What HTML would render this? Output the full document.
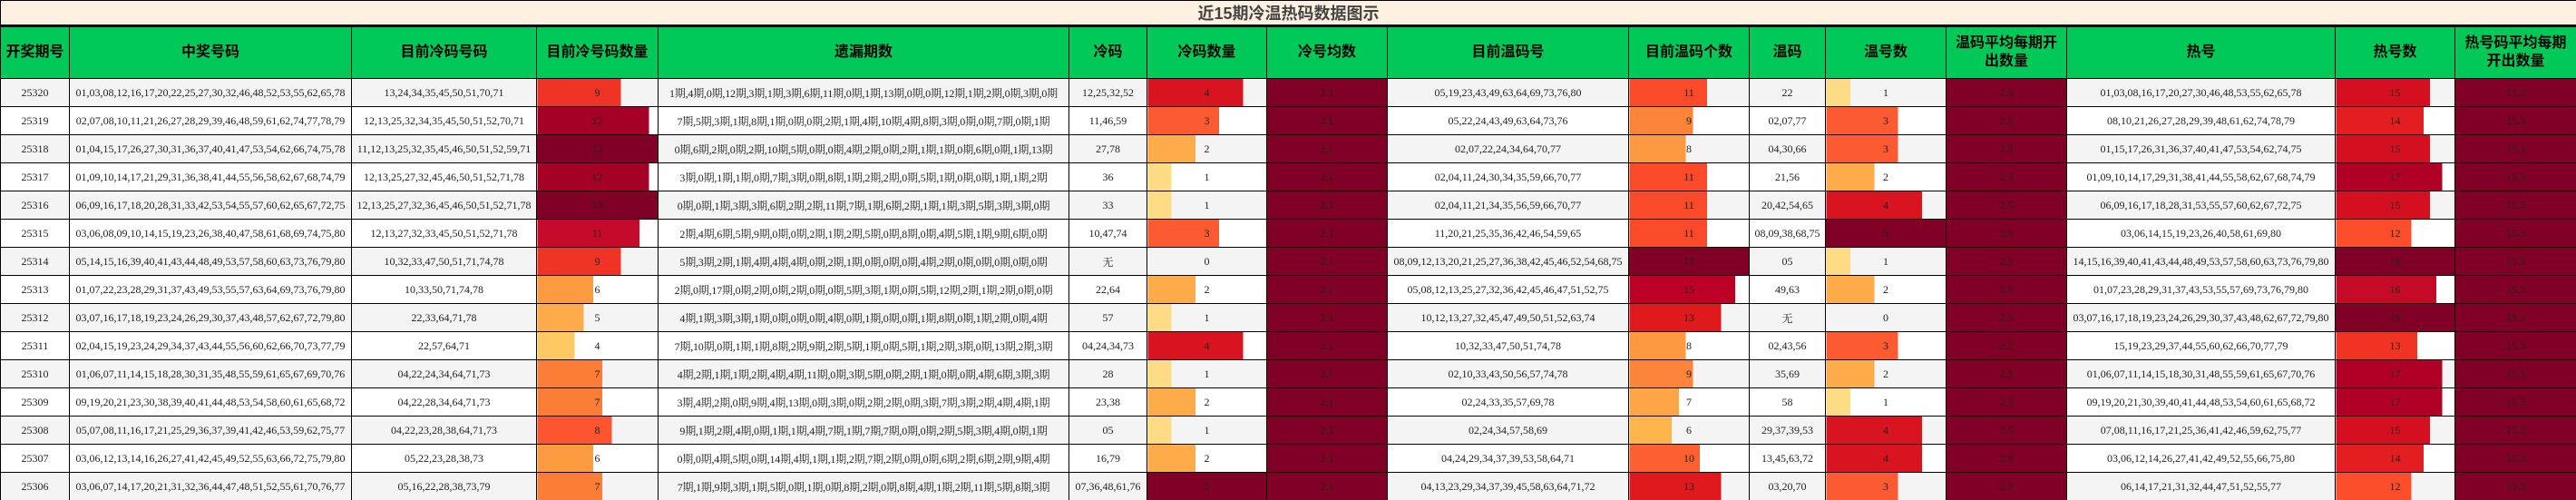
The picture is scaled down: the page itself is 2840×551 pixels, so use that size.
<!DOCTYPE html>
<html><head><meta charset="utf-8">
<style>
*{margin:0;padding:0;box-sizing:border-box}
html,body{width:2840px;height:551px;overflow:hidden;background:#fff}
table{border-collapse:collapse;table-layout:fixed;width:2840px;font-family:"Liberation Serif","Noto Serif CJK SC",serif;font-size:12px;color:#222}
td,th{border:1px solid #000;text-align:center;vertical-align:middle;overflow:hidden;white-space:nowrap}
.t td{height:27px;background:#fff0e0;border-bottom:3px solid #000;font-family:"Liberation Sans","Noto Sans CJK SC",sans-serif;font-size:18px;font-weight:bold;color:#444}
.h th{height:58px;background:#00c957;font-family:"Liberation Sans","Noto Sans CJK SC",sans-serif;font-size:16px;font-weight:bold;color:#000;line-height:20px;padding:0 2px}
tr.r td{height:31px}
tr.o{background:#f4f4f4}
tr.e{background:#fff}
.a{background:#800026}
.m{font-size:12px;letter-spacing:-0.2px}
</style></head><body>
<table>
<colgroup><col style="width:76px"><col style="width:311px"><col style="width:204px"><col style="width:134px"><col style="width:453px"><col style="width:86px"><col style="width:132px"><col style="width:133px"><col style="width:266px"><col style="width:133px"><col style="width:84px"><col style="width:133px"><col style="width:133px"><col style="width:296px"><col style="width:132px"><col style="width:134px"></colgroup>
<tr class="t"><td colspan="16">近15期冷温热码数据图示</td></tr>
<tr class="h"><th>开奖期号</th><th>中奖号码</th><th>目前冷码号码</th><th>目前冷号码数量</th><th>遗漏期数</th><th>冷码</th><th>冷码数量</th><th>冷号均数</th><th>目前温码号</th><th>目前温码个数</th><th>温码</th><th>温号数</th><th>温码平均每期开<br>出数量</th><th>热号</th><th>热号数</th><th>热号码平均每期<br>开出数量</th></tr>

<tr class="r o"><td>25320</td><td>01,03,08,12,16,17,20,22,25,27,30,32,46,48,52,53,55,62,65,78</td><td>13,24,34,35,45,50,51,70,71</td><td style="background:linear-gradient(90deg,#ef3425 69.2%,transparent 0)">9</td><td class="m">1期,4期,0期,12期,3期,1期,3期,6期,11期,0期,1期,13期,0期,0期,12期,1期,2期,0期,3期,0期</td><td>12,25,32,52</td><td style="background:linear-gradient(90deg,#d7141f 80%,transparent 0)">4</td><td class="a">2.1</td><td>05,19,23,43,49,63,64,69,73,76,80</td><td style="background:linear-gradient(90deg,#fa4a29 64.7%,transparent 0)">11</td><td>22</td><td style="background:linear-gradient(90deg,#fedc85 20%,transparent 0)">1</td><td class="a">2.5</td><td>01,03,08,16,17,20,27,30,46,48,53,55,62,65,78</td><td style="background:linear-gradient(90deg,#d41020 78.9%,transparent 0)">15</td><td class="a">15.3</td></tr>

<tr class="r e"><td>25319</td><td>02,07,08,10,11,21,26,27,28,29,39,46,48,59,61,62,74,77,78,79</td><td>12,13,25,32,34,35,45,50,51,52,70,71</td><td style="background:linear-gradient(90deg,#a50026 92.3%,transparent 0)">12</td><td class="m">7期,5期,3期,1期,8期,1期,0期,0期,2期,1期,4期,10期,4期,8期,3期,0期,0期,7期,0期,1期</td><td>11,46,59</td><td style="background:linear-gradient(90deg,#fc5a31 60%,transparent 0)">3</td><td class="a">2.1</td><td>05,22,24,43,49,63,64,73,76</td><td style="background:linear-gradient(90deg,#fc8438 52.9%,transparent 0)">9</td><td>02,07,77</td><td style="background:linear-gradient(90deg,#fc5a31 60%,transparent 0)">3</td><td class="a">2.5</td><td>08,10,21,26,27,28,29,39,48,61,62,74,78,79</td><td style="background:linear-gradient(90deg,#e41e20 73.7%,transparent 0)">14</td><td class="a">15.3</td></tr>

<tr class="r o"><td>25318</td><td>01,04,15,17,26,27,30,31,36,37,40,41,47,53,54,62,66,74,75,78</td><td>11,12,13,25,32,35,45,46,50,51,52,59,71</td><td style="background:#800026">13</td><td class="m">0期,6期,2期,0期,2期,10期,5期,0期,0期,4期,2期,0期,2期,1期,1期,0期,6期,0期,1期,13期</td><td>27,78</td><td style="background:linear-gradient(90deg,#feab49 40%,transparent 0)">2</td><td class="a">2.1</td><td>02,07,22,24,34,64,70,77</td><td style="background:linear-gradient(90deg,#fd9a41 47.1%,transparent 0)">8</td><td>04,30,66</td><td style="background:linear-gradient(90deg,#fc5a31 60%,transparent 0)">3</td><td class="a">2.5</td><td>01,15,17,26,31,36,37,40,41,47,53,54,62,74,75</td><td style="background:linear-gradient(90deg,#d41020 78.9%,transparent 0)">15</td><td class="a">15.3</td></tr>

<tr class="r e"><td>25317</td><td>01,09,10,14,17,21,29,31,36,38,41,44,55,56,58,62,67,68,74,79</td><td>12,13,25,27,32,45,46,50,51,52,71,78</td><td style="background:linear-gradient(90deg,#a50026 92.3%,transparent 0)">12</td><td class="m">3期,0期,1期,1期,0期,7期,3期,0期,8期,1期,2期,2期,0期,5期,1期,0期,0期,1期,1期,2期</td><td>36</td><td style="background:linear-gradient(90deg,#fedc85 20%,transparent 0)">1</td><td class="a">2.1</td><td>02,04,11,24,30,34,35,59,66,70,77</td><td style="background:linear-gradient(90deg,#fa4a29 64.7%,transparent 0)">11</td><td>21,56</td><td style="background:linear-gradient(90deg,#feab49 40%,transparent 0)">2</td><td class="a">2.5</td><td>01,09,10,14,17,29,31,38,41,44,55,58,62,67,68,74,79</td><td style="background:linear-gradient(90deg,#b10026 89.5%,transparent 0)">17</td><td class="a">15.3</td></tr>

<tr class="r o"><td>25316</td><td>06,09,16,17,18,20,28,31,33,42,53,54,55,57,60,62,65,67,72,75</td><td>12,13,25,27,32,36,45,46,50,51,52,71,78</td><td style="background:#800026">13</td><td class="m">0期,0期,1期,3期,3期,6期,2期,2期,11期,7期,1期,6期,2期,1期,1期,3期,5期,3期,3期,0期</td><td>33</td><td style="background:linear-gradient(90deg,#fedc85 20%,transparent 0)">1</td><td class="a">2.1</td><td>02,04,11,21,34,35,56,59,66,70,77</td><td style="background:linear-gradient(90deg,#fa4a29 64.7%,transparent 0)">11</td><td>20,42,54,65</td><td style="background:linear-gradient(90deg,#d7141f 80%,transparent 0)">4</td><td class="a">2.5</td><td>06,09,16,17,18,28,31,53,55,57,60,62,67,72,75</td><td style="background:linear-gradient(90deg,#d41020 78.9%,transparent 0)">15</td><td class="a">15.3</td></tr>

<tr class="r e"><td>25315</td><td>03,06,08,09,10,14,15,19,23,26,38,40,47,58,61,68,69,74,75,80</td><td>12,13,27,32,33,45,50,51,52,71,78</td><td style="background:linear-gradient(90deg,#c60a2b 84.6%,transparent 0)">11</td><td class="m">2期,4期,6期,5期,9期,0期,0期,2期,1期,2期,5期,0期,8期,0期,4期,5期,1期,9期,6期,0期</td><td>10,47,74</td><td style="background:linear-gradient(90deg,#fc5a31 60%,transparent 0)">3</td><td class="a">2.1</td><td>11,20,21,25,35,36,42,46,54,59,65</td><td style="background:linear-gradient(90deg,#fa4a29 64.7%,transparent 0)">11</td><td>08,09,38,68,75</td><td style="background:#800026">5</td><td class="a">2.5</td><td>03,06,14,15,19,23,26,40,58,61,69,80</td><td style="background:linear-gradient(90deg,#fc4e2a 63.2%,transparent 0)">12</td><td class="a">15.3</td></tr>

<tr class="r o"><td>25314</td><td>05,14,15,16,39,40,41,43,44,48,49,53,57,58,60,63,73,76,79,80</td><td>10,32,33,47,50,51,71,74,78</td><td style="background:linear-gradient(90deg,#ef3425 69.2%,transparent 0)">9</td><td class="m">5期,3期,2期,1期,4期,4期,4期,0期,2期,1期,0期,0期,0期,4期,2期,0期,0期,0期,0期,0期</td><td>无</td><td>0</td><td class="a">2.1</td><td>08,09,12,13,20,21,25,27,36,38,42,45,46,52,54,68,75</td><td style="background:#800026">17</td><td>05</td><td style="background:linear-gradient(90deg,#fedc85 20%,transparent 0)">1</td><td class="a">2.5</td><td>14,15,16,39,40,41,43,44,48,49,53,57,58,60,63,73,76,79,80</td><td style="background:#800026">19</td><td class="a">15.3</td></tr>

<tr class="r e"><td>25313</td><td>01,07,22,23,28,29,31,37,43,49,53,55,57,63,64,69,73,76,79,80</td><td>10,33,50,71,74,78</td><td style="background:linear-gradient(90deg,#fd9b40 46.2%,transparent 0)">6</td><td class="m">2期,0期,17期,0期,2期,0期,2期,0期,0期,5期,3期,1期,0期,5期,12期,2期,1期,2期,0期,0期</td><td>22,64</td><td style="background:linear-gradient(90deg,#feab49 40%,transparent 0)">2</td><td class="a">2.1</td><td>05,08,12,13,25,27,32,36,42,45,46,47,51,52,75</td><td style="background:linear-gradient(90deg,#bd0026 88.2%,transparent 0)">15</td><td>49,63</td><td style="background:linear-gradient(90deg,#feab49 40%,transparent 0)">2</td><td class="a">2.5</td><td>01,07,23,28,29,31,37,43,53,55,57,69,73,76,79,80</td><td style="background:linear-gradient(90deg,#c40a26 84.2%,transparent 0)">16</td><td class="a">15.3</td></tr>

<tr class="r o"><td>25312</td><td>03,07,16,17,18,19,23,24,26,29,30,37,43,48,57,62,67,72,79,80</td><td>22,33,64,71,78</td><td style="background:linear-gradient(90deg,#feab49 38.5%,transparent 0)">5</td><td class="m">4期,1期,3期,3期,1期,0期,0期,0期,4期,0期,1期,0期,0期,1期,8期,0期,1期,2期,0期,4期</td><td>57</td><td style="background:linear-gradient(90deg,#fedc85 20%,transparent 0)">1</td><td class="a">2.1</td><td>10,12,13,27,32,45,47,49,50,51,52,63,74</td><td style="background:linear-gradient(90deg,#e0191c 76.5%,transparent 0)">13</td><td>无</td><td>0</td><td class="a">2.5</td><td>03,07,16,17,18,19,23,24,26,29,30,37,43,48,62,67,72,79,80</td><td style="background:#800026">19</td><td class="a">15.3</td></tr>

<tr class="r e"><td>25311</td><td>02,04,15,19,23,24,29,34,37,43,44,55,56,60,62,66,70,73,77,79</td><td>22,57,64,71</td><td style="background:linear-gradient(90deg,#fec862 30.8%,transparent 0)">4</td><td class="m">7期,10期,0期,1期,1期,8期,2期,9期,2期,5期,1期,0期,5期,1期,2期,3期,0期,13期,2期,3期</td><td>04,24,34,73</td><td style="background:linear-gradient(90deg,#d7141f 80%,transparent 0)">4</td><td class="a">2.1</td><td>10,32,33,47,50,51,74,78</td><td style="background:linear-gradient(90deg,#fd9a41 47.1%,transparent 0)">8</td><td>02,43,56</td><td style="background:linear-gradient(90deg,#fc5a31 60%,transparent 0)">3</td><td class="a">2.5</td><td>15,19,23,29,37,44,55,60,62,66,70,77,79</td><td style="background:linear-gradient(90deg,#f03323 68.4%,transparent 0)">13</td><td class="a">15.3</td></tr>

<tr class="r o"><td>25310</td><td>01,06,07,11,14,15,18,28,30,31,35,48,55,59,61,65,67,69,70,76</td><td>04,22,24,34,64,71,73</td><td style="background:linear-gradient(90deg,#fc7d36 53.8%,transparent 0)">7</td><td class="m">4期,2期,1期,1期,2期,4期,4期,11期,0期,3期,5期,0期,2期,1期,0期,0期,4期,6期,3期,3期</td><td>28</td><td style="background:linear-gradient(90deg,#fedc85 20%,transparent 0)">1</td><td class="a">2.1</td><td>02,10,33,43,50,56,57,74,78</td><td style="background:linear-gradient(90deg,#fc8438 52.9%,transparent 0)">9</td><td>35,69</td><td style="background:linear-gradient(90deg,#feab49 40%,transparent 0)">2</td><td class="a">2.5</td><td>01,06,07,11,14,15,18,30,31,48,55,59,61,65,67,70,76</td><td style="background:linear-gradient(90deg,#b10026 89.5%,transparent 0)">17</td><td class="a">15.3</td></tr>

<tr class="r e"><td>25309</td><td>09,19,20,21,23,30,38,39,40,41,44,48,53,54,58,60,61,65,68,72</td><td>04,22,28,34,64,71,73</td><td style="background:linear-gradient(90deg,#fc7d36 53.8%,transparent 0)">7</td><td class="m">3期,4期,2期,0期,9期,4期,13期,0期,3期,0期,2期,2期,0期,3期,7期,3期,2期,4期,4期,1期</td><td>23,38</td><td style="background:linear-gradient(90deg,#feab49 40%,transparent 0)">2</td><td class="a">2.1</td><td>02,24,33,35,57,69,78</td><td style="background:linear-gradient(90deg,#fea647 41.2%,transparent 0)">7</td><td>58</td><td style="background:linear-gradient(90deg,#fedc85 20%,transparent 0)">1</td><td class="a">2.5</td><td>09,19,20,21,30,39,40,41,44,48,53,54,60,61,65,68,72</td><td style="background:linear-gradient(90deg,#b10026 89.5%,transparent 0)">17</td><td class="a">15.3</td></tr>

<tr class="r o"><td>25308</td><td>05,07,08,11,16,17,21,25,29,36,37,39,41,42,46,53,59,62,75,77</td><td>04,22,23,28,38,64,71,73</td><td style="background:linear-gradient(90deg,#fc5530 61.5%,transparent 0)">8</td><td class="m">9期,1期,2期,4期,0期,1期,1期,4期,7期,1期,7期,7期,0期,0期,2期,5期,3期,4期,0期,1期</td><td>05</td><td style="background:linear-gradient(90deg,#fedc85 20%,transparent 0)">1</td><td class="a">2.1</td><td>02,24,34,57,58,69</td><td style="background:linear-gradient(90deg,#feb54c 35.3%,transparent 0)">6</td><td>29,37,39,53</td><td style="background:linear-gradient(90deg,#d7141f 80%,transparent 0)">4</td><td class="a">2.5</td><td>07,08,11,16,17,21,25,36,41,42,46,59,62,75,77</td><td style="background:linear-gradient(90deg,#d41020 78.9%,transparent 0)">15</td><td class="a">15.3</td></tr>

<tr class="r e"><td>25307</td><td>03,06,12,13,14,16,26,27,41,42,45,49,52,55,63,66,72,75,79,80</td><td>05,22,23,28,38,73</td><td style="background:linear-gradient(90deg,#fd9b40 46.2%,transparent 0)">6</td><td class="m">0期,0期,4期,5期,0期,14期,4期,1期,1期,2期,7期,2期,0期,0期,6期,2期,6期,2期,9期,4期</td><td>16,79</td><td style="background:linear-gradient(90deg,#feab49 40%,transparent 0)">2</td><td class="a">2.1</td><td>04,24,29,34,37,39,53,58,64,71</td><td style="background:linear-gradient(90deg,#fc6031 58.8%,transparent 0)">10</td><td>13,45,63,72</td><td style="background:linear-gradient(90deg,#d7141f 80%,transparent 0)">4</td><td class="a">2.5</td><td>03,06,12,14,26,27,41,42,49,52,55,66,75,80</td><td style="background:linear-gradient(90deg,#e41e20 73.7%,transparent 0)">14</td><td class="a">15.3</td></tr>

<tr class="r o"><td>25306</td><td>03,06,07,14,17,20,21,31,32,36,44,47,48,51,52,55,61,70,76,77</td><td>05,16,22,28,38,73,79</td><td style="background:linear-gradient(90deg,#fc7d36 53.8%,transparent 0)">7</td><td class="m">7期,1期,9期,3期,1期,5期,0期,1期,0期,8期,2期,0期,8期,4期,1期,2期,11期,5期,8期,3期</td><td>07,36,48,61,76</td><td style="background:#800026">5</td><td class="a">2.1</td><td>04,13,23,29,34,37,39,45,58,63,64,71,72</td><td style="background:linear-gradient(90deg,#e0191c 76.5%,transparent 0)">13</td><td>03,20,70</td><td style="background:linear-gradient(90deg,#fc5a31 60%,transparent 0)">3</td><td class="a">2.5</td><td>06,14,17,21,31,32,44,47,51,52,55,77</td><td style="background:linear-gradient(90deg,#fc4e2a 63.2%,transparent 0)">12</td><td class="a">15.3</td></tr>
</table>
</body></html>
